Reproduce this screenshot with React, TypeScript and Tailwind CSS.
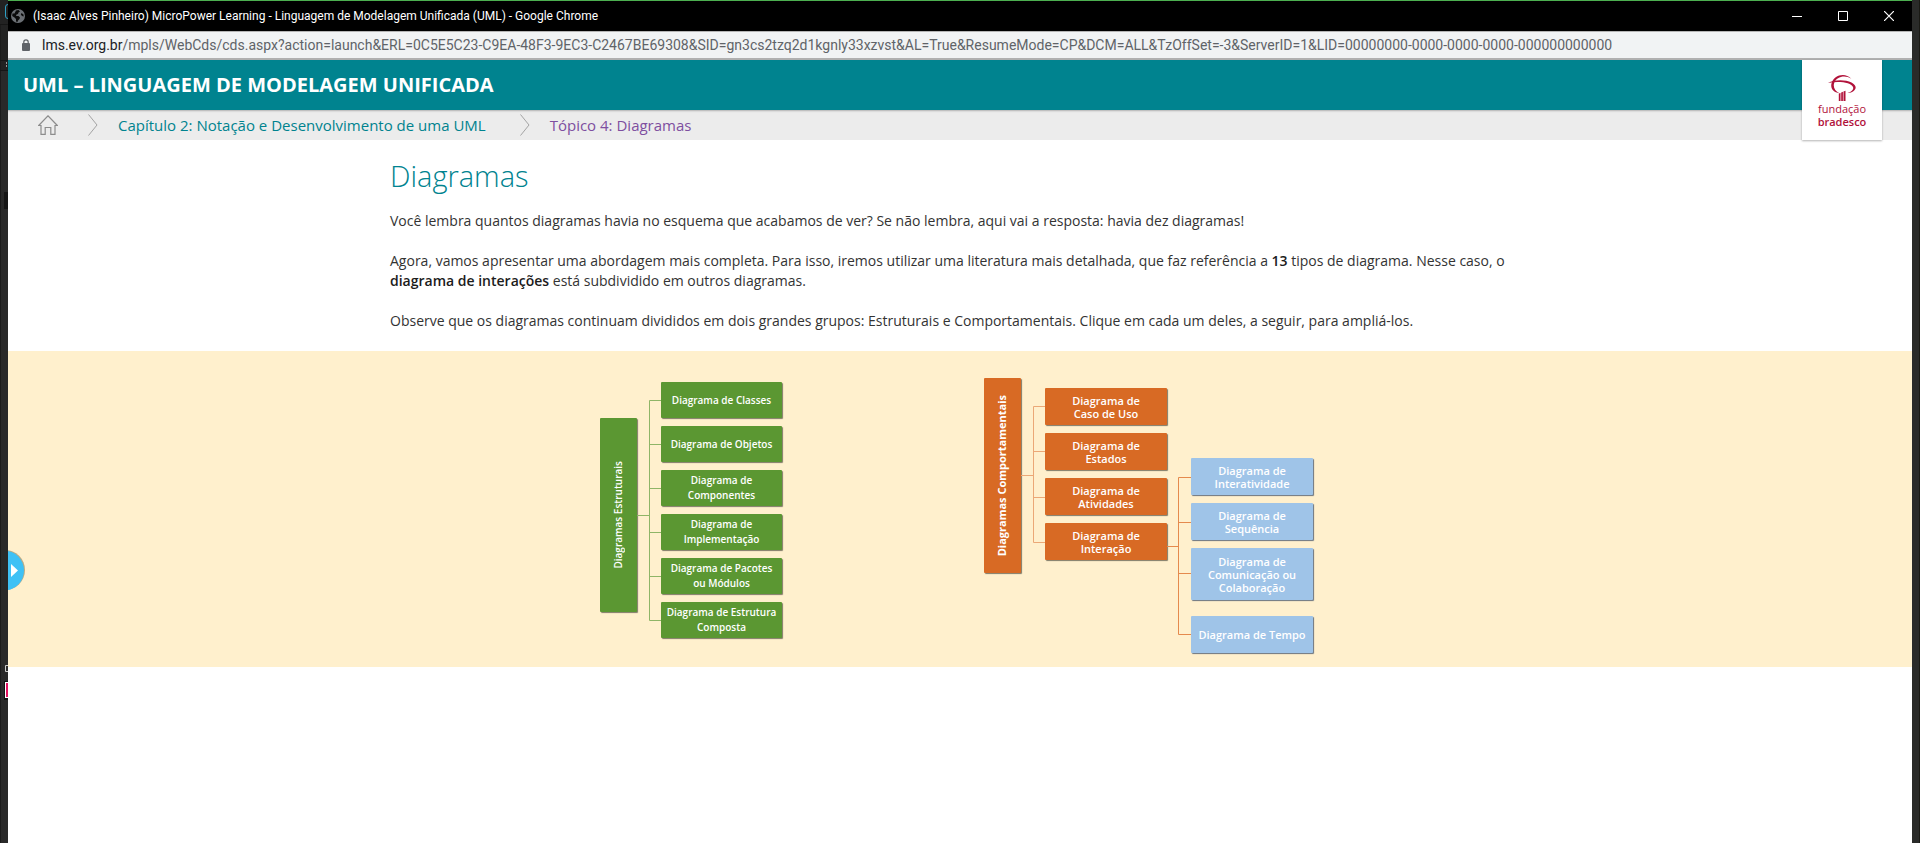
import React from "react";

type Tone = "green" | "orange" | "blue";

const tones: Record<Tone, string> = {
  green:
    "h-9 w-[121px] bg-[#5b9732] text-[10px] leading-[15px] font-semibold shadow-[1px_1px_1px_#807a68]",
  orange:
    "h-[37px] w-[122px] bg-[#d86a24] text-[11px] leading-[13px] font-semibold shadow-[1px_1px_1px_#807a68]",
  blue: "w-[122px] bg-[#9fc4e8] text-[11px] leading-[13px] font-semibold shadow-[1px_1px_1px_#6b7480]",
};

function Node({ tone, lines, size = "" }: { tone: Tone; lines: string[]; size?: string }) {
  return (
    <li
      className={`flex flex-col items-center justify-center rounded-[1px] text-center whitespace-nowrap text-white ${tones[tone]} ${size}`}
    >
      {lines.map((line) => (
        <span key={line}>{line}</span>
      ))}
    </li>
  );
}

function Chevron() {
  return (
    <svg aria-hidden="true" viewBox="0 0 10 22" className="h-[22px] w-[10px]" fill="none" stroke="#a3a3a3">
      <path d="M.5 .5 9 11 .5 21.5" />
    </svg>
  );
}

const structural = [
  ["Diagrama de Classes"],
  ["Diagrama de Objetos"],
  ["Diagrama de", "Componentes"],
  ["Diagrama de", "Implementação"],
  ["Diagrama de Pacotes", "ou Módulos"],
  ["Diagrama de Estrutura", "Composta"],
];

const behavioural = [
  ["Diagrama de", "Caso de Uso"],
  ["Diagrama de", "Estados"],
  ["Diagrama de", "Atividades"],
  ["Diagrama de", "Interação"],
];

function StructuralDiagram() {
  return (
    <button type="button" className="flex items-start pt-1" aria-label="Ampliar Diagramas Estruturais">
      <span className="mt-9 flex h-[194px] w-[37px] items-center justify-center rounded-[1px] bg-[#5b9732] text-[10px] font-semibold text-white shadow-[1px_1px_1px_#807a68]">
        <span className="rotate-180 whitespace-nowrap [writing-mode:vertical-rl]">Diagramas Estruturais</span>
      </span>
      <svg aria-hidden="true" viewBox="0 0 24 256" className="h-64 w-6" fill="none" stroke="#8fb566">
        <path d="M0 133.500H12.500M24 18.500H12.500V238.500H24M12.500 62.500H24M12.500 106.500H24M12.500 150.500H24M12.500 194.500H24" />
      </svg>
      <ul className="flex flex-col gap-2">
        {structural.map((lines) => (
          <Node key={lines.join(" ")} tone="green" lines={lines} />
        ))}
      </ul>
    </button>
  );
}

function BehaviouralDiagram() {
  return (
    <button type="button" className="flex items-start" aria-label="Ampliar Diagramas Comportamentais">
      <span className="flex h-[195px] w-[37px] items-center justify-center rounded-[1px] bg-[#d86a24] text-[11px] font-bold text-white shadow-[1px_1px_1px_#807a68]">
        <span className="rotate-180 whitespace-nowrap [writing-mode:vertical-rl]">Diagramas Comportamentais</span>
      </span>
      <svg aria-hidden="true" viewBox="0 0 24 276" className="h-[276px] w-6" fill="none" stroke="#eba877">
        <path d="M0 97.500H12.500M24 28.500H12.500V164.500H24M12.500 73.500H24M12.500 119.500H24" />
      </svg>
      <ul className="mt-2.5 flex flex-col gap-2">
        {behavioural.map((lines) => (
          <Node key={lines.join(" ")} tone="orange" lines={lines} />
        ))}
      </ul>
      <svg aria-hidden="true" viewBox="0 0 24 276" className="h-[276px] w-6" fill="none" stroke="#e58a4d">
        <path d="M0 168.500H11.500M24 99.500H11.500V256.500H24M11.500 144.500H24M11.500 195.500H24" />
      </svg>
      <ul className="mt-20 flex flex-col gap-2">
        <Node tone="blue" size="h-[37px]" lines={["Diagrama de", "Interatividade"]} />
        <Node tone="blue" size="h-[37px]" lines={["Diagrama de", "Sequência"]} />
        <Node tone="blue" size="h-[52px]" lines={["Diagrama de", "Comunicação ou", "Colaboração"]} />
        <Node tone="blue" size="mt-2 h-[37px]" lines={["Diagrama de Tempo"]} />
      </ul>
    </button>
  );
}

function TitleBar() {
  return (
    <div className="flex h-8 items-center border-t border-b border-t-[#4caf50] border-b-[#b5b5b5] bg-black pl-[3px]">
      <svg aria-hidden="true" viewBox="0 0 14 14" className="size-[14px]">
        <circle cx="7" cy="7" r="7" fill="#6b6f74" />
        <path
          d="M5 1.500 7.500 1 9 2.500 7.500 3.500 7 5 5.500 5.500 5 7 7.500 7 9 8.500 8.500 10 7 11.500 6.500 13 5 12.500 5 10 3.500 8.500 1.200 7 1.500 4.500 3.500 4.500Z M10.500 4 12.500 5.500 12.700 7.500 11 7 9.800 5.500Z"
          fill="#0b0b0b"
        />
      </svg>
      <span className="ml-2 grow font-[Roboto,sans-serif] text-xs whitespace-nowrap text-white">
        (Isaac Alves Pinheiro) MicroPower Learning - Linguagem de Modelagem Unificada (UML) - Google Chrome
      </span>
      <div className="flex">
        <button type="button" aria-label="Minimizar" className="flex h-[30px] w-[46px] items-center justify-center">
          <svg viewBox="0 0 10 10" className="size-2.5" stroke="#fff">
            <path d="M0 5.500H10" />
          </svg>
        </button>
        <button type="button" aria-label="Maximizar" className="flex h-[30px] w-[46px] items-center justify-center">
          <svg viewBox="0 0 10 10" className="size-2.5" fill="none" stroke="#fff">
            <path d="M.5 .5H9.500V9.500H.5Z" />
          </svg>
        </button>
        <button type="button" aria-label="Fechar" className="flex h-[30px] w-[46px] items-center justify-center">
          <svg viewBox="0 0 10 10" className="size-2.5" stroke="#fff" strokeWidth="1.200">
            <path d="M0 0 10 10M10 0 0 10" />
          </svg>
        </button>
      </div>
    </div>
  );
}

function AddressBar() {
  return (
    <div className="flex h-7 items-center border-b-2 border-[#b0b0b0] bg-[#f1f3f4] pl-[13px]">
      <svg aria-hidden="true" viewBox="0 0 10 12" className="h-3 w-2.5">
        <rect x="1" y="4" width="8" height="8" rx="1" fill="#5f6368" />
        <path d="M2.800 4.500V3a2.200 2.200 0 0 1 4.400 0V4.500" fill="none" stroke="#5f6368" strokeWidth="1.200" />
      </svg>
      <span className="ml-[11px] font-[Roboto,sans-serif] text-sm whitespace-nowrap text-[#5f6368]">
        <span className="text-[#202124]">lms.ev.org.br</span>
        /mpls/WebCds/cds.aspx?action=launch&amp;ERL=0C5E5C23-C9EA-48F3-9EC3-C2467BE69308&amp;SID=gn3cs2tzq2d1kgnly33xzvst&amp;AL=True&amp;ResumeMode=CP&amp;DCM=ALL&amp;TzOffSet=-3&amp;ServerID=1&amp;LID=00000000-0000-0000-0000-000000000000
      </span>
    </div>
  );
}

function Logo() {
  return (
    <a
      href="#inicio"
      aria-label="Fundação Bradesco"
      className="absolute top-0 right-[30px] z-10 flex size-20 flex-col items-center bg-white pt-3.5 text-[11px] text-[#b1123a] shadow-[0_1px_2px_rgba(0,0,0,0.3)]"
    >
      <svg aria-hidden="true" viewBox="0 0 28 27" className="h-[27px] w-7" fill="#b1123a">
        <path d="M0 9C6 5.500 17 5.300 23.500 8.500c5 2.500 5.500 6.700 1.500 9-2 1.200-4.500 1.700-7 1.600 5-.9 8-3.300 7-6C23.500 8.500 11 6.800 0 9Z" />
        <path d="M11.500 19.300C5 18.500 2.300 14 3.500 9.500 5.500 1.500 16.500-2.500 23.300 4.700 17 .5 8.500 2.500 6.200 9 4.800 13.500 7 17 11.500 19.300Z" />
        <path d="M10.800 19.500l1.700-.5v8h-1.700ZM13.200 18.500l1.700-.7V27h-1.700ZM15.500 17.500l2-.7V27h-2Z" />
      </svg>
      <span className="mt-px leading-[14px]">fundação</span>
      <span className="leading-3 font-semibold">bradesco</span>
    </a>
  );
}

export default function App() {
  return (
    <div className="flex min-h-screen bg-[#292929] font-['Open_Sans',sans-serif]">
      <svg aria-hidden="true" viewBox="0 0 8 843" className="h-[843px] w-2 shrink-0" fill="none">
        <path d="M0 0H8V70H0Z" fill="#222" />
        <path d="M.5 24V843" stroke="#1b1b1b" />
        <path d="M8 4.500Q5.500 4.500 5.500 7V16Q5.500 18.500 8 18.500" stroke="#2d9fc4" />
        <path d="M0 24.500H8M0 60.500H8M0 70.500H8" stroke="#161616" />
        <path d="M6 62h1v2H6ZM6 65h1v2H6Z" fill="#999" />
        <path d="M4 192H8V209H4Z" fill="#161616" />
        <path d="M8 665.500H5.500V671.500H8" stroke="#ccc" />
        <path d="M4 681H8V700H4Z" fill="#111" />
        <path d="M5 682H8V698H5Z" fill="#fff" />
        <path d="M6 683H8V697H6Z" fill="#e0115f" />
      </svg>
      <div className="relative flex min-w-0 grow flex-col bg-white">
        <TitleBar />
        <AddressBar />
        <header className="relative">
          <div className="flex h-[50px] items-center bg-[#00838f] pl-[15px]">
            <h1 className="text-xl font-bold text-white">UML – LINGUAGEM DE MODELAGEM UNIFICADA</h1>
          </div>
          <nav
            aria-label="Navegação"
            className="flex h-[30px] items-center bg-[#ececec] pl-[30px] text-[15px] shadow-[inset_0_2px_2px_-1px_rgba(0,0,0,0.25)]"
          >
            <a href="#inicio" aria-label="Início">
              <svg viewBox="0 0 20 20" className="size-5" fill="none" stroke="#8c8c8c" strokeWidth="1.200">
                <path d="M.7 10.500 10 .8 19.300 10.500H17V19.300H12.800V12.500H7.200V19.300H3V10.500Z" />
              </svg>
            </a>
            <span className="ml-[30px]">
              <Chevron />
            </span>
            <a href="#capitulo-2" className="ml-5 text-[#00838f]">
              Capítulo 2: Notação e Desenvolvimento de uma UML
            </a>
            <span className="ml-[34px]">
              <Chevron />
            </span>
            <a href="#topico-4" className="ml-5 text-[#7e4fa0]">
              Tópico 4: Diagramas
            </a>
          </nav>
          <Logo />
        </header>
        <main>
          <div className="mx-auto flex max-w-[1140px] flex-col gap-5 pt-[18px] pb-5 text-sm leading-5 text-[#333]">
            <h2 className="-mb-[3px] text-[29px] leading-9 font-light text-[#00838f]">Diagramas</h2>
            <p>
              Você lembra quantos diagramas havia no esquema que acabamos de ver? Se não lembra, aqui vai a resposta:
              havia dez diagramas!
            </p>
            <p>
              Agora, vamos apresentar uma abordagem mais completa. Para isso, iremos utilizar uma literatura mais
              detalhada, que faz referência a <strong className="font-semibold text-[#1c1c1c]">13</strong> tipos de
              diagrama. Nesse caso, o{" "}
              <strong className="font-semibold text-[#1c1c1c]">diagrama de interações</strong> está subdividido em
              outros diagramas.
            </p>
            <p>
              Observe que os diagramas continuam divididos em dois grandes grupos: Estruturais e Comportamentais.
              Clique em cada um deles, a seguir, para ampliá-los.
            </p>
          </div>
          <section className="flex items-start justify-center gap-[202px] bg-[#fff0cd] pt-[27px] pr-[7px] pb-[13px]">
            <StructuralDiagram />
            <BehaviouralDiagram />
          </section>
        </main>
        <button
          type="button"
          aria-label="Abrir menu"
          className="absolute top-[550px] left-0 h-[41px] w-[17px] overflow-hidden"
        >
          <svg viewBox="0 0 17 41" className="h-[41px] w-[17px]">
            <circle cx="-3" cy="20" r="20" fill="#8a7d55" opacity=".6" />
            <circle cx="-4" cy="20.500" r="20" fill="#3fc1f5" />
            <path d="M3 14 10 20.500 3 27Z" fill="#fff" />
          </svg>
        </button>
      </div>
      <div className="w-2 shrink-0 border-r border-[#1a1a14] bg-[#2a2b29]" />
    </div>
  );
}
